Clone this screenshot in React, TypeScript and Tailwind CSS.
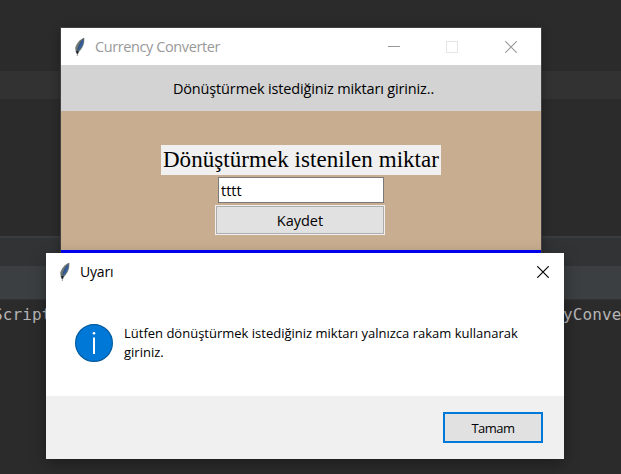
function Feather() {
  return (
    <svg width="12" height="20" viewBox="0 0 12 20" className="shrink-0">
      <path d="M10.2 .8C6.5 2 2.2 6.5 1.2 11L1.8 15L3.5 16L5.8 14C8.7 11 11 6 10.2 .8Z" fill="#6f7775" />
      <path d="M9.4 2.2C6 5 3.8 9 3.4 14L5.5 12.5C8 10 9.8 6 9.4 2.2Z" fill="#345f9f" />
      <path d="M9.4 1.6C6.2 5 4.3 10 3.4 15" stroke="#34465c" strokeWidth=".6" fill="none" />
      <path d="M2 14.2H4.8L4 17H2.8Z" fill="#15191d" />
      <path d="M3.3 16.5V19" stroke="#999" strokeWidth="1" />
    </svg>
  );
}

function Cross({ color }: { color: string }) {
  return (
    <svg width="12" height="12" viewBox="0 0 12 12" className="shrink-0">
      <path d="M.3 .3L11.7 11.7M11.7 .3L.3 11.7" stroke={color} strokeWidth="1.15" />
    </svg>
  );
}

function Editor() {
  return (
    <div className="flex h-full w-full flex-col bg-[#2b2b2b]">
      <div className="h-[71px]" />
      <div className="h-[28px] bg-[#323232]" />
      <div className="h-[137px]" />
      <div className="h-[30px] border-t-2 border-[#393b3d] bg-[#313335]" />
      <div className="h-[34px] border-b border-[#323537] bg-[#3c3f41]" />
      <div className="flex h-[30px] items-center justify-between overflow-hidden whitespace-pre font-['DejaVu_Sans_Mono',monospace] text-[16px] leading-[30px] tracking-[0.1px] text-[#b5b5b5]">
        <span className="ml-[-7px]">Script</span>
        <span className="w-[58px]">yConve</span>
      </div>
    </div>
  );
}

function ConverterWindow() {
  return (
    <div className="absolute left-[61px] top-[28px] flex h-[225px] w-[480px] flex-col bg-[#c8ad90] shadow-[0_0_0_1px_#424242,0_2px_10px_rgba(0,0,0,0.35)]">
      <div className="flex h-[37px] items-center bg-white pl-[13px]">
        <Feather />
        <span className="ml-[9px] text-[14.5px] leading-5 tracking-[-0.4px] text-[#999]">Currency Converter</span>
        <div className="ml-auto flex items-center pr-[24px]">
          <div className="mr-[46px] h-px w-[12px] bg-[#999]" />
          <div className="mr-[47px] h-[12px] w-[12px] border border-[#e5e5e5]" />
          <Cross color="#999" />
        </div>
      </div>
      <div className="flex h-[46px] items-center justify-center bg-[#d3d3d3] pl-[5px] pt-[2px] text-[14.5px] tracking-[-0.15px]">
        <span>Dönüştürmek istediğiniz miktarı giriniz..</span>
      </div>
      <div className="flex flex-1 flex-col items-center pt-[34px]">
        <div className="h-[30px] w-[280px] whitespace-nowrap bg-[#f0f0f0] text-center font-['Liberation_Serif',serif] text-[23px] leading-[30px] tracking-[0.05px]">Dönüştürmek istenilen miktar</div>
        <div className="mt-[2px] h-[26px] w-[166px] border border-[#7a7a7a] bg-white pl-[2px] text-[14.5px] leading-[25px]">tttt</div>
        <div className="mr-[2px] mt-[2px] h-[30px] w-[170px] border border-[#f0f0f0] bg-[#adadad] p-px">
          <div className="h-full bg-[#e1e1e1] text-center text-[14.5px] leading-[27px]">Kaydet</div>
        </div>
      </div>
      <div className="h-[3px] bg-[#0000ff]" />
    </div>
  );
}

function WarningDialog() {
  return (
    <div className="absolute left-[46px] top-[253px] flex h-[206px] w-[518px] flex-col bg-white shadow-[0_4px_14px_rgba(0,0,0,0.35)]">
      <div className="flex h-[37px] items-center pl-[13px] pr-[15px]">
        <Feather />
        <span className="ml-[9px] text-[14px] leading-5 tracking-[-0.2px]">Uyarı</span>
        <div className="ml-auto"><Cross color="#000" /></div>
      </div>
      <div className="flex h-[106px] pl-[29px] pt-[34px]">
        <svg width="38" height="38" viewBox="0 0 38 38" className="shrink-0">
          <circle cx="19" cy="19" r="18.4" fill="#0078d7" stroke="#005a9e" strokeWidth="1.2" />
          <circle cx="19" cy="9.3" r="1.3" fill="white" />
          <path d="M19 13.5V30" stroke="white" strokeWidth="2" />
        </svg>
        <p className="ml-[11px] whitespace-nowrap text-[13px] leading-[19px]">Lütfen dönüştürmek istediğiniz miktarı yalnızca rakam kullanarak<br />giriniz.</p>
      </div>
      <div className="flex h-[63px] justify-end bg-[#f0f0f0] pr-[21px] pt-[16px]">
        <div className="h-[31px] w-[100px] border-2 border-[#0078d7] bg-[#e1e1e1] text-center text-[13px] leading-[28px] tracking-[-0.5px]">Tamam</div>
      </div>
    </div>
  );
}

export default function App() {
  return (
    <div className="relative h-[474px] w-[621px] overflow-hidden font-['Open_Sans','Noto_Sans',sans-serif] text-black">
      <Editor />
      <ConverterWindow />
      <WarningDialog />
    </div>
  );
}
